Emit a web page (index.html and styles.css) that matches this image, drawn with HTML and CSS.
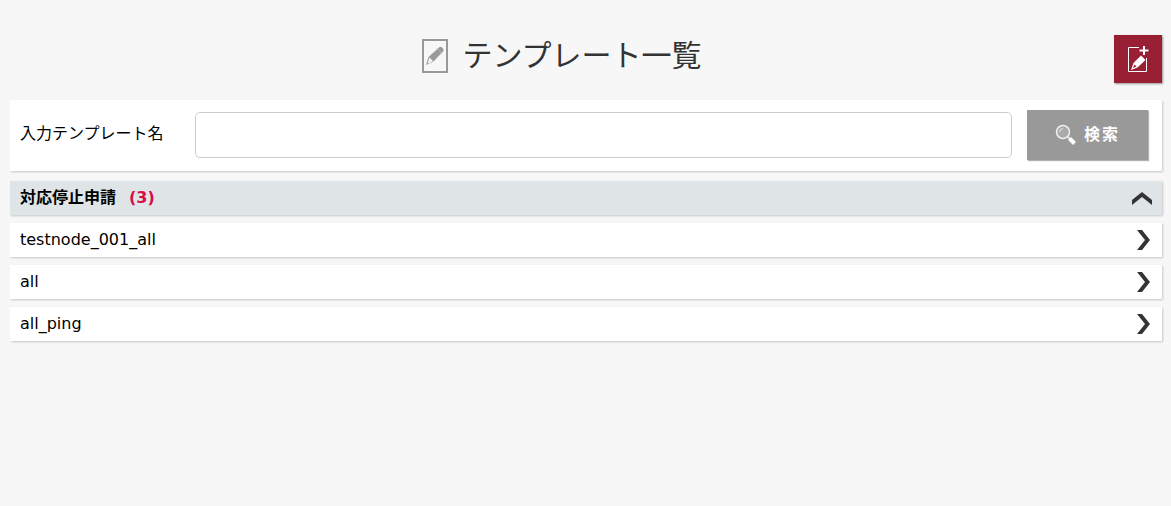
FILE: index.html
```html
<!DOCTYPE html>
<html lang="ja">
<head>
<meta charset="UTF-8">
<meta name="viewport" content="width=device-width, initial-scale=1">
<title>テンプレート一覧</title>
<link rel="stylesheet" href="styles.css">
</head>
<body>
<header class="page-header">
	<h1 class="page-title">
		<svg class="title-icon" viewBox="0 0 26 34" width="26" height="34" aria-hidden="true">
			<rect x="1" y="1" width="24" height="32" fill="none" stroke="#999" stroke-width="2"/>
			<path d="M4 26l2.500-8L17 8.500q1.500-1.500 3.500 .5q2 2 .5 3.500L11.500 22.500z" fill="#999"/>
			<path d="M5.500 24.500l2-6 3.500 3.500-3.500 2z" fill="#f7f7f7"/>
			<path d="M15 9.500l5 5" stroke="#bbb" stroke-width="1"/>
		</svg>
		テンプレート一覧
	</h1>
	<button type="button" class="add-button" aria-label="新規作成">
		<svg viewBox="0 0 22 28" width="22" height="28" aria-hidden="true">
			<path d="M12 2.500H1.500v24h18V13" fill="none" stroke="#fff" stroke-width="1"/>
			<path d="M17 1v9M12.500 5.500h9" stroke="#fff" stroke-width="2"/>
			<path d="M4 25l2.500-7 7.500-7.500 4.500 4.500-8 7.500z" fill="#fff"/>
			<path d="M6 23l1.500-3.500 2 2z" fill="#991f34"/>
		</svg>
	</button>
</header>
<main>
	<form class="search-panel">
		<label class="search-label" for="template-name">入力テンプレート名</label>
		<input class="search-input" type="text" id="template-name" name="template-name">
		<button type="submit" class="search-button">
			<svg viewBox="0 0 22 22" width="22" height="22" aria-hidden="true">
				<circle cx="8" cy="8" r="6.500" fill="#aaa" stroke="#eee" stroke-width="1.500"/>
				<path d="M4.500 8q.5-3 3.500-3.500" fill="none" stroke="#eee"/>
				<path d="M12.500 12.500l2.500 2.500" stroke="#eee" stroke-width="1.500"/>
				<path d="M14.500 14.500l5 5" stroke="#fff" stroke-width="4"/>
			</svg>
			検索
		</button>
	</form>
	<details class="template-group" open>
		<summary class="row group-header">
			<span>対応停止申請<span class="count">(3)</span></span>
			<svg class="arrow-up" viewBox="0 0 20 13" width="20" height="13" aria-hidden="true">
				<path d="M0 8L10 0l10 8v5L10 5 0 13z" fill="#333"/>
			</svg>
		</summary>
		<ul class="template-list">
			<li>
				<a class="row" href="#testnode_001_all">testnode_001_all
					<svg class="arrow-right" viewBox="0 0 13 20" width="13" height="20" aria-hidden="true">
						<path d="M0 0h5l8 10-8 10H0l8-10z" fill="#333"/>
					</svg>
				</a>
			</li>
			<li>
				<a class="row" href="#all">all
					<svg class="arrow-right" viewBox="0 0 13 20" width="13" height="20" aria-hidden="true">
						<path d="M0 0h5l8 10-8 10H0l8-10z" fill="#333"/>
					</svg>
				</a>
			</li>
			<li>
				<a class="row" href="#all_ping">all_ping
					<svg class="arrow-right" viewBox="0 0 13 20" width="13" height="20" aria-hidden="true">
						<path d="M0 0h5l8 10-8 10H0l8-10z" fill="#333"/>
					</svg>
				</a>
			</li>
		</ul>
	</details>
</main>
</body>
</html>
```
FILE: styles.css
```css
* {
	box-sizing: border-box;
}

body {
	margin: 0;
	padding: 35px 9px 10px 10px;
	background-color: #f7f7f7;
	color: #000;
	font-family: "DejaVu Sans", "Noto Sans CJK JP", sans-serif;
	font-size: 16px;
	line-height: 24px;
}

button, input {
	font: inherit;
}

.page-header {
	display: flex;
	align-items: flex-start;
	margin-bottom: 17px;
}

.page-title {
	display: flex;
	flex: 1;
	align-items: center;
	justify-content: center;
	gap: 14px;
	margin: 0;
	color: #333;
	font-size: 30px;
	font-weight: normal;
	line-height: 42px;
}

.add-button {
	display: flex;
	align-items: center;
	justify-content: center;
	width: 48px;
	height: 48px;
	padding: 0;
	border: 0;
	background-color: #991f34;
	box-shadow: 1px 1px 2px rgba(0, 0, 0, 0.4);
}

.search-panel {
	display: flex;
	align-items: center;
	gap: 15px;
	margin-bottom: 10px;
	padding: 10px 14px 11px 10px;
	background-color: #fff;
	box-shadow: 1px 1px 2px rgba(0, 0, 0, 0.2);
}

.search-label {
	width: 160px;
	padding-bottom: 2px;
}

.search-input {
	flex: 1;
	min-width: 0;
	height: 46px;
	padding: 0 10px;
	border: 1px solid #ccc;
	border-radius: 5px;
	background-color: #fff;
}

.search-button {
	display: flex;
	align-items: center;
	justify-content: center;
	gap: 7px;
	width: 121px;
	height: 50px;
	padding: 0;
	border: 0;
	background-color: #999;
	color: #fff;
	font-weight: bold;
	letter-spacing: 2px;
	box-shadow: 1px 1px 1px rgba(0, 0, 0, 0.3);
}

.row {
	display: flex;
	align-items: center;
	justify-content: space-between;
	height: 34px;
	margin-bottom: 8px;
	padding: 0 10px;
	background-color: #fff;
	color: #000;
	text-decoration: none;
	box-shadow: 1px 1px 2px rgba(0, 0, 0, 0.2);
}

.group-header {
	background-color: #dfe4e6;
	font-weight: bold;
	list-style: none;
	cursor: pointer;
}

.count {
	margin-left: 13px;
	color: #dc0a46;
}

.template-list {
	margin: 0;
	padding: 0;
	list-style: none;
}

.arrow-right {
	margin-right: 2px;
}
```
